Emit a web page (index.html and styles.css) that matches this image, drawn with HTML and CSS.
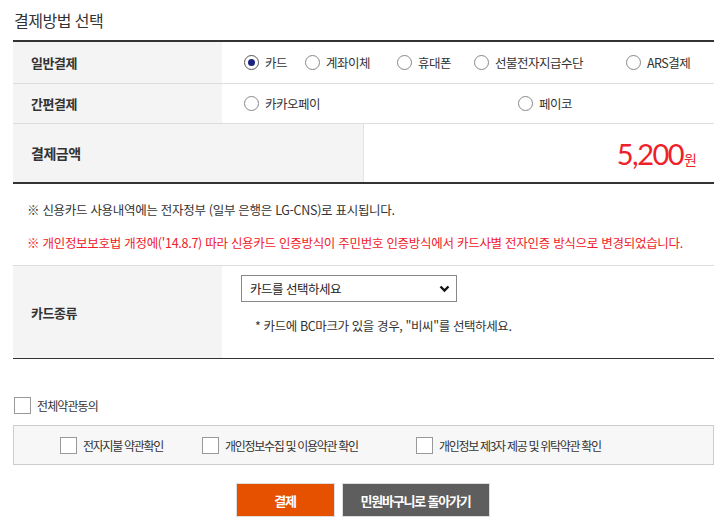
FILE: index.html
```html
<!DOCTYPE html>
<html lang="ko">
<head>
<meta charset="utf-8">
<link rel="stylesheet" href="styles.css">
</head>
<body>
<div class="wrap">
  <h2 class="title">결제방법 선택</h2>
  <div class="pay">
    <div class="row r1">
      <div class="th">일반결제</div>
      <div class="td opts opts-5">
        <label class="opt"><span class="radio on"></span>카드</label>
        <label class="opt"><span class="radio"></span>계좌이체</label>
        <label class="opt"><span class="radio"></span>휴대폰</label>
        <label class="opt"><span class="radio"></span>선불전자지급수단</label>
        <label class="opt"><span class="radio"></span>ARS결제</label>
      </div>
    </div>
    <div class="row r2">
      <div class="th">간편결제</div>
      <div class="td opts opts-2">
        <label class="opt"><span class="radio"></span>카카오페이</label>
        <label class="opt"><span class="radio"></span>페이코</label>
      </div>
    </div>
    <div class="row r3">
      <div class="th wide">결제금액</div>
      <div class="td amount"><span class="num">5,200</span><span class="won">원</span></div>
    </div>
  </div>
  <div class="notice">
    <p>※ 신용카드 사용내역에는 전자정부 (일부 은행은 LG-CNS)로 표시됩니다.</p>
    <p class="red">※ 개인정보보호법 개정에('14.8.7) 따라 신용카드 인증방식이 주민번호 인증방식에서 카드사별 전자인증 방식으로 변경되었습니다.</p>
  </div>
  <div class="card">
    <div class="th">카드종류</div>
    <div class="td cardsel">
      <div class="select"><span>카드를 선택하세요</span>
        <svg width="11" height="8" viewBox="0 0 11 8"><path d="M1.5 1.5 L5.5 5.5 L9.5 1.5" fill="none" stroke="#111" stroke-width="2.4"/></svg>
      </div>
      <p class="hint">* 카드에 BC마크가 있을 경우, "비씨"를 선택하세요.</p>
    </div>
  </div>
  <label class="all"><span class="chk"></span>전체약관동의</label>
  <div class="agree">
    <label class="ag a1"><span class="chk"></span>전자지불 약관확인</label>
    <label class="ag a2"><span class="chk"></span>개인정보수집 및 이용약관 확인</label>
    <label class="ag a3"><span class="chk"></span>개인정보 제3자 제공 및 위탁약관 확인</label>
  </div>
  <div class="btns">
    <button class="btn pay-btn">결제</button>
    <button class="btn back-btn">민원바구니로 돌아가기</button>
  </div>
</div>
</body>
</html>
```
FILE: styles.css
```css
* { box-sizing: border-box; }
html, body { margin: 0; padding: 0; background: #fff; }
body {
  font-family: "Noto Sans CJK KR", "Noto Sans", sans-serif;
  color: #333;
  font-size: 13px;
}
.wrap { width: 701px; margin-left: 13px; padding-top: 9px; }
.title {
  margin: 0 0 0 1px;
  font-size: 16px;
  font-weight: 400;
  line-height: 22px;
  height: 31px;
  color: #333;
  letter-spacing: -0.5px;
}
.pay { border-top: 2px solid #333; border-bottom: 2px solid #333; }
.row { display: flex; border-bottom: 1px solid #ddd; }
.row.r3 { border-bottom: none; }
.th {
  width: 209px;
  background: #f4f4f4;
  font-weight: 700;
  font-size: 13px;
  padding-left: 18px;
  display: flex;
  align-items: center;
  color: #333;
  letter-spacing: -0.5px;
}
.th.wide { width: 350px; font-size: 14px; }
.td { flex: 1; display: flex; align-items: center; }
.r1 { height: 42px; }
.r2 { height: 40px; }
.r3 { height: 58px; }
.opts { padding-left: 22px; display: grid; }
.opts-5 { grid-template-columns: 61px 92px 77px 152px auto; }
.opts-2 { grid-template-columns: 274px auto; }
.opt { display: flex; align-items: center; font-size: 12.5px; color: #333; letter-spacing: -0.5px; white-space: nowrap; }
.radio {
  width: 15px; height: 15px;
  border: 1px solid #888;
  border-radius: 50%;
  margin-right: 6px;
  background: #fff;
  position: relative;
  flex: none;
}
.radio.on { border-color: #555; }
.radio.on::after {
  content: ""; position: absolute;
  left: 3px; top: 3px; width: 7px; height: 7px;
  border-radius: 50%; background: #1a237e;
}
.amount {
  justify-content: flex-end;
  align-items: baseline;
  padding-right: 17px;
  padding-top: 12px;
  border-left: 1px solid #e4e4e4;
  color: #f0202a;
}
.num { font-family: "Lato", "Noto Sans", sans-serif; font-size: 29px; letter-spacing: -1.5px; line-height: 36px; }
.won { font-size: 14px; margin-left: 1px; }
.notice { padding: 16px 0 12px 14px; }
.notice p { margin: 0; line-height: 20px; font-size: 12.5px; letter-spacing: -0.3px; }
.notice p + p { margin-top: 13px; }
.notice .red { color: #f0202a; letter-spacing: -0.28px; }
.card {
  display: flex;
  height: 94px;
  border-top: 1px solid #ddd;
  border-bottom: 1px solid #333;
}
.cardsel { flex-direction: column; align-items: flex-start; padding: 9px 0 0 19px; }
.select {
  width: 216px; height: 27px;
  border: 1px solid #888;
  display: flex; align-items: center; justify-content: space-between;
  padding: 0 6px 0 8px;
  font-size: 12.5px; color: #222;
  letter-spacing: -0.5px;
}
.hint { margin: 14px 0 0 14px; font-size: 12.5px; letter-spacing: -0.4px; color: #333; }
.all {
  display: flex; align-items: center;
  margin: 37px 0 0 1px;
  font-size: 12px; letter-spacing: -0.9px;
  height: 18px;
}
.chk {
  width: 17px; height: 17px;
  border: 1px solid #999;
  background: #fff;
  margin-right: 6px;
  flex: none;
}
.agree {
  margin-top: 11px;
  height: 40px;
  background: #f7f7f7;
  border: 1px solid #ccc;
  display: flex; align-items: center;
  padding-left: 46px;
}
.ag { display: flex; align-items: center; font-size: 12px; letter-spacing: -1.3px; }
.a1 { width: 142px; }
.a2 { width: 214px; }
.btns { display: flex; justify-content: center; gap: 7px; margin-top: 18px; padding-right: 2px; }
.btn {
  height: 34px;
  border: 1px solid #ddd;
  color: #fff;
  font-family: inherit;
  font-weight: 700;
  font-size: 13px;
  letter-spacing: -1.2px;
}
.pay-btn { width: 99px; background: #e65100; }
.back-btn { width: 148px; background: #5e5e5e; }
```
